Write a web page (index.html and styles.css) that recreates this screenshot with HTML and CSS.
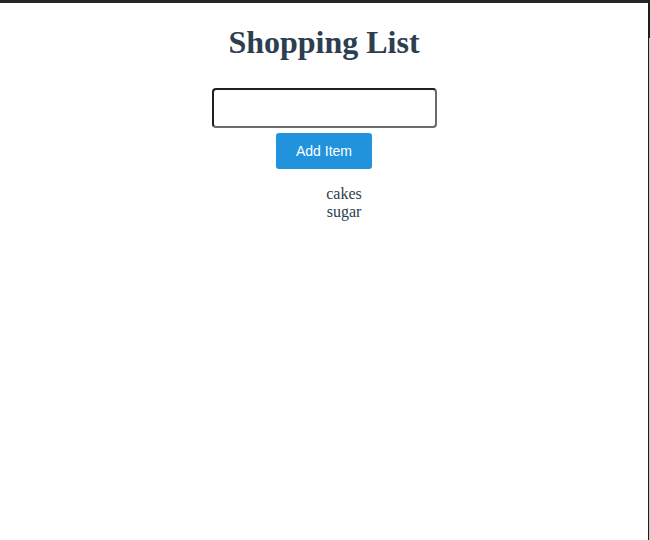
FILE: index.html
```html
<!DOCTYPE html>
<html>
<head>
<meta charset="utf-8">
<link rel="stylesheet" href="styles.css">
</head>
<body>
<div class="frame">
  <div class="app">
    <h1 class="title">Shopping List</h1>
    <input class="item-input" type="text">
    <button class="add-btn">Add Item</button>
    <ul class="items">
      <li>cakes</li>
      <li>sugar</li>
    </ul>
  </div>
</div>
</body>
</html>
```

FILE: styles.css
```css
html, body {
  margin: 0;
  padding: 0;
  background: #fff;
  overflow: hidden;
}
.frame {
  position: relative;
  box-sizing: border-box;
  width: 650px;
  height: 540px;
  border-top: 3px solid #25262b;
  border-right: 2px solid #1e1e1e;
}
.frame::after {
  content: "";
  position: absolute;
  right: -2px;
  top: 35px;
  bottom: 0;
  width: 1px;
  background: #c8c8c8;
}
.app {
  display: flex;
  flex-direction: column;
  align-items: center;
  font-family: "Liberation Serif", "Times New Roman", serif;
  color: #2c3e50;
}
.title {
  margin: 21px 0 0 0;
  font-size: 32px;
  line-height: 37px;
  font-weight: bold;
}
.item-input {
  box-sizing: border-box;
  margin-top: 27px;
  width: 225px;
  height: 40px;
  border: 2px solid;
  border-color: #1f1f1f #6b6b6b #6b6b6b #1f1f1f;
  border-radius: 4px;
  padding: 0 6px;
  font-size: 16px;
  outline: none;
}
.add-btn {
  margin-top: 5px;
  width: 96px;
  height: 36px;
  border: none;
  border-radius: 3px;
  background: #2193dc;
  color: #fff;
  font-family: "Liberation Sans", Arial, sans-serif;
  font-size: 14px;
  padding: 0;
}
.items {
  list-style: none;
  margin: 16px 0 0 0;
  padding: 0 0 0 40px;
  align-self: stretch;
  text-align: center;
  font-size: 16px;
  line-height: 18px;
}
```
